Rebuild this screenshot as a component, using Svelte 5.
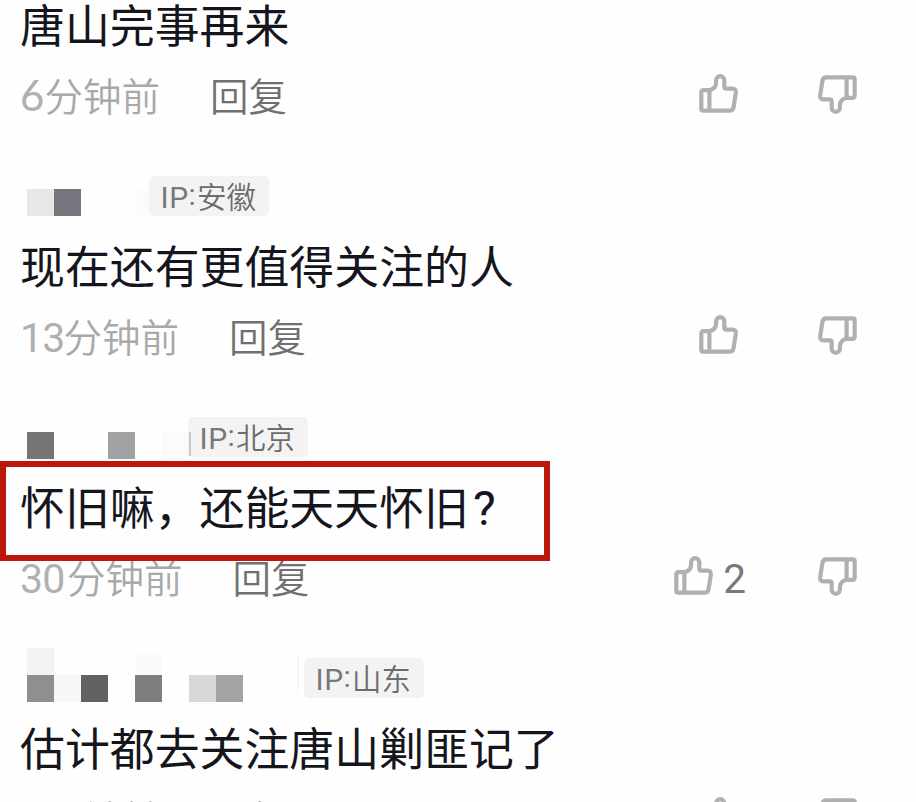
<script>
  const CELL = 27

  const comments = [
    { id: 1, text: '唐山完事再来', count: '6', width: 24.5, likes: 0 },
    {
      id: 2,
      region: '安徽',
      nameWidth: 122,
      drop: 13,
      cells: [
        [0, 27, '#e7e7e6'],
        [27, 27, '#76747c'],
        [108, 27, '#fbfbfb'],
      ],
      text: '现在还有更值得关注的人',
      count: '13',
      width: 43.5,
      likes: 0,
    },
    {
      id: 3,
      region: '北京',
      nameWidth: 161,
      drop: 15,
      cells: [
        [0, 27, '#757575'],
        [81, 27, '#a1a2a4'],
        [135, 27, '#fbfbfb'],
      ],
      smudge: [162, 27, 24, '#c8c8c8'],
      text: '怀旧嘛，还能天天怀旧',
      mark: '?',
      boxed: true,
      count: '30',
      width: 47,
      likes: 2,
    },
    {
      id: 4,
      region: '山东',
      nameWidth: 277,
      drop: 17,
      cells: [
        [0, 0, '#f3f3f3'],
        [108, 6, '#fafafa'],
        [0, 27, '#8f8f8f'],
        [27, 27, '#f7f7f7'],
        [54, 27, '#616161'],
        [108, 27, '#7e7e7e'],
        [162, 27, '#d8d8d8'],
        [189, 27, '#a3a3a3'],
      ],
      smudge: [270, 8, 38, '#f7f7f7'],
      text: '估计都去关注唐山剿匪记了',
      count: '8',
      width: 24.5,
      likes: 0,
    },
  ]
</script>

{#snippet thumb(down)}
  <svg class="thumb" class:down viewBox="0 0 42 42" width="42" height="42" aria-hidden="true">
    <path d="M11.6 17.2H5.3a2 2 0 0 0-2 2v16.5a2 2 0 0 0 2 2h26.2q3.5 0 4.1-3.6l2.2-14.4q.5-4-3.4-4h-6q-2.1 0-2.1-2.1V7.3a4.1 4.1 0 0 0-8.2 0v2.2c0 4-2.6 6.7-6.5 7.7z" />
    <path d="M11.4 17v20.7" />
  </svg>
{/snippet}

<main>
  {#each comments as c (c.id)}
    <article>
      {#if c.region}
        <header>
          <svg class="name" width={c.nameWidth} height="54" style:margin-top="{c.drop - CELL}px">
            {#each c.cells as [x, y, fill]}
              <rect {x} {y} width={Math.min(CELL, c.nameWidth - x)} height={CELL} {fill} />
            {/each}
            {#if c.smudge}
              <rect x={c.smudge[0]} y={c.smudge[1]} width="2" height={c.smudge[2]} fill={c.smudge[3]} />
            {/if}
          </svg>
          <span class="badge"><span class="latin">IP<span class="colon">:</span></span>{c.region}</span>
        </header>
      {/if}
      <p class="text" class:boxed={c.boxed}>{c.text}{#if c.mark}<span class="mark">{c.mark}</span>{/if}</p>
      <footer>
        <span class="time"><span class="num" class:single={c.count.length === 1} style:width="{c.width}px">{c.count}</span>分钟前</span>
        <span class="reply">回复</span>
        <span class="like" class:counted={c.likes > 0}>
          {@render thumb(false)}
          {#if c.likes}<span class="likes">{c.likes}</span>{/if}
        </span>
        {@render thumb(true)}
      </footer>
    </article>
  {/each}
</main>

<style>
  :global(body) {
    background: #fefefe;
    overflow: hidden;
  }

  main {
    width: 916px;
    height: 802px;
    overflow: hidden;
    background: #fefefe;
    font-family: 'Noto Sans CJK SC', sans-serif;
    display: flex;
    flex-direction: column;
    gap: 54px;
  }

  article {
    flex: none;
    display: flex;
    flex-direction: column;
  }

  article:first-child {
    margin-top: -7px;
  }

  header {
    height: 40px;
    margin-bottom: 18px;
    padding-left: 27px;
    display: flex;
    align-items: flex-start;
  }

  .name {
    flex: none;
    z-index: 1;
    overflow: visible;
    shape-rendering: crispEdges;
  }

  .badge {
    width: 120px;
    height: 40px;
    box-sizing: border-box;
    padding-left: 11.5px;
    border-radius: 5px;
    background: #f3f3f3;
    color: #6c6c6c;
    font-size: 29.5px;
    font-weight: 350;
    line-height: 39px;
    white-space: nowrap;
  }

  .latin {
    display: inline-block;
    width: 36.5px;
    font-family: Roboto, sans-serif;
    font-weight: 400;
    font-size: 30px;
    letter-spacing: 0.5px;
    color: #787878;
  }

  .colon {
    display: inline-block;
    transform: translateY(-3px);
  }

  .text {
    position: relative;
    margin: 0 0 15px;
    height: 64px;
    padding-left: 20px;
    color: #15151d;
    font-size: 44.9px;
    line-height: 62px;
    white-space: nowrap;
  }

  .boxed::after {
    content: '';
    position: absolute;
    left: 0;
    top: -14.5px;
    width: 549.5px;
    height: 100px;
    box-sizing: border-box;
    border: 6px solid #bb170b;
    z-index: 1;
  }

  .mark {
    font-family: Roboto, sans-serif;
    font-size: 48px;
    font-weight: 400;
    margin-left: 4px;
  }

  footer {
    height: 50px;
    padding: 0 58px 0 20px;
    display: flex;
    align-items: flex-start;
    font-size: 38.5px;
    line-height: 44px;
    white-space: nowrap;
  }

  .time {
    color: #a9a9a9;
    font-weight: 350;
  }

  .num {
    display: inline-block;
    font-family: Roboto, sans-serif;
    font-weight: 400;
    font-size: 41px;
    letter-spacing: -0.8px;
    color: #b0b0b0;
  }

  .single {
    font-family: Lato, sans-serif;
    font-size: 42px;
    letter-spacing: -1.5px;
  }

  .reply {
    margin-left: 50px;
    color: #707070;
    font-weight: 350;
  }

  .like {
    display: flex;
    margin-left: auto;
    margin-right: 76px;
  }

  .counted {
    margin-right: 70px;
  }

  .likes {
    margin-left: 8px;
    color: #7a7a7a;
    font-family: Roboto, sans-serif;
    font-size: 40.5px;
    font-weight: 400;
    line-height: 50px;
  }

  .thumb {
    flex: none;
    margin-top: 1px;
    fill: none;
    stroke: #b0b0b0;
    stroke-width: 4.2;
    stroke-linejoin: round;
  }

  .down {
    transform: rotate(180deg);
  }
</style>
